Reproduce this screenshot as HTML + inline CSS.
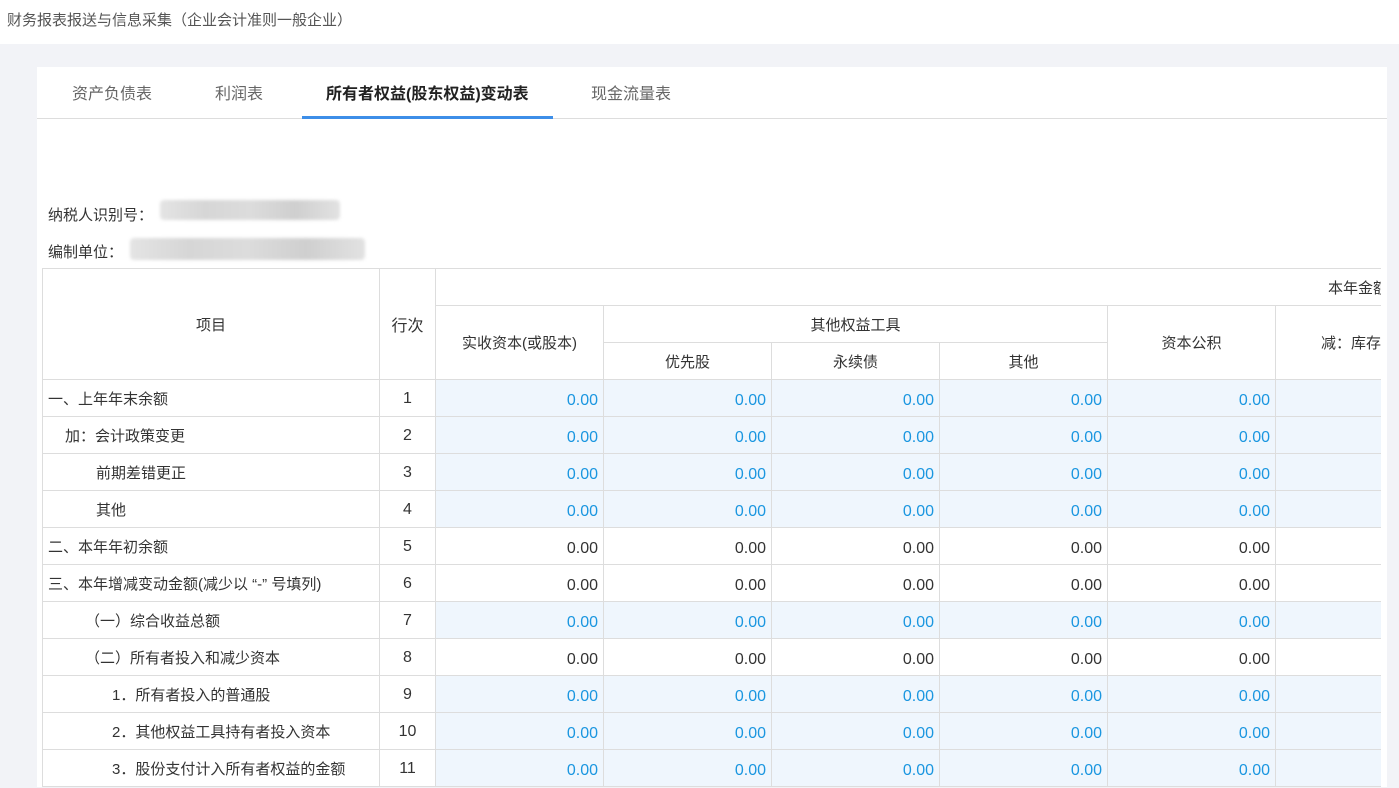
<!DOCTYPE html>
<html><head><meta charset="utf-8"><style>
*{margin:0;padding:0;box-sizing:border-box}
body{width:1399px;height:774px;overflow:hidden;background:#f2f3f7;font-family:"Liberation Sans","Noto Sans CJK SC",sans-serif;color:#333;font-size:15px;position:relative}
.top{position:absolute;left:0;top:0;width:1399px;height:44px;background:#fff;font-size:15px;color:#555;padding:9px 0 0 7px}
.card{position:absolute;left:37px;top:67px;width:1350px;height:720px;background:#fff}
.tabs{position:absolute;left:0;top:0;width:1350px;height:52px;border-bottom:1px solid #ddd}
.tab{position:absolute;top:13px;font-size:16px;color:#666}
.tab.on{color:#222;font-weight:bold}
.ul{position:absolute;left:265px;top:49px;width:251px;height:3px;background:#3d8ee8}
.lbl{position:absolute;left:11px;font-size:15px;color:#333}
.blur{position:absolute;background:linear-gradient(90deg,#e4e4e4,#d6d6d6,#dcdcdc,#cfcfcf,#e2e2e2);border-radius:4px;filter:blur(1.5px)}
.wrap{position:absolute;left:5px;top:201px;width:1339px;height:520px;overflow:hidden}
table{border-collapse:collapse;table-layout:fixed;width:1507px}
td{border:1px solid #ddd;height:37px;padding:0 5px;white-space:nowrap;overflow:hidden}
th{border:1px solid #ddd;font-weight:normal;height:37px;text-align:center}
td.n{text-align:center;font-size:16px;padding-top:2px}
td.v{text-align:right;font-size:16px;color:#1a96e0;background:#eff6fd;padding-top:5px}
td.k{text-align:right;font-size:16px;color:#333;padding-top:5px}
</style></head><body>
<div class="top">财务报表报送与信息采集（企业会计准则一般企业）</div>
<div class="card">
<div class="tabs">
<span class="tab" style="left:35px">资产负债表</span>
<span class="tab" style="left:178px">利润表</span>
<span class="tab on" style="left:289px">所有者权益(股东权益)变动表</span>
<span class="tab" style="left:554px">现金流量表</span>
<div class="ul"></div>
</div>
<div class="lbl" style="top:137px">纳税人识别号：</div>
<div class="blur" style="left:123px;top:133px;width:180px;height:20px"></div>
<div class="lbl" style="top:174px">编制单位：</div>
<div class="blur" style="left:93px;top:171px;width:235px;height:22px"></div>
<div class="wrap"><table>
<colgroup><col style="width:337px"><col style="width:56px"><col style="width:168px"><col style="width:168px"><col style="width:168px"><col style="width:168px"><col style="width:168px"><col style="width:274px"></colgroup>
<tr><th rowspan="3">项目</th><th rowspan="3" style="font-size:16px">行次</th><th colspan="6" style="text-align:left;padding-left:892px">本年金额</th></tr>
<tr><th rowspan="2">实收资本(或股本)</th><th colspan="3">其他权益工具</th><th rowspan="2">资本公积</th><th rowspan="2" style="text-align:left;padding-left:45px">减：库存股</th></tr>
<tr><th>优先股</th><th>永续债</th><th>其他</th></tr>
<tr><td>一、上年年末余额</td><td class="n">1</td><td class="v">0.00</td><td class="v">0.00</td><td class="v">0.00</td><td class="v">0.00</td><td class="v">0.00</td><td class="v"></td></tr>
<tr><td style="padding-left:22px">加：会计政策变更</td><td class="n">2</td><td class="v">0.00</td><td class="v">0.00</td><td class="v">0.00</td><td class="v">0.00</td><td class="v">0.00</td><td class="v"></td></tr>
<tr><td style="padding-left:53px">前期差错更正</td><td class="n">3</td><td class="v">0.00</td><td class="v">0.00</td><td class="v">0.00</td><td class="v">0.00</td><td class="v">0.00</td><td class="v"></td></tr>
<tr><td style="padding-left:53px">其他</td><td class="n">4</td><td class="v">0.00</td><td class="v">0.00</td><td class="v">0.00</td><td class="v">0.00</td><td class="v">0.00</td><td class="v"></td></tr>
<tr><td>二、本年年初余额</td><td class="n">5</td><td class="k">0.00</td><td class="k">0.00</td><td class="k">0.00</td><td class="k">0.00</td><td class="k">0.00</td><td class="k"></td></tr>
<tr><td>三、本年增减变动金额(减少以 “-” 号填列)</td><td class="n">6</td><td class="k">0.00</td><td class="k">0.00</td><td class="k">0.00</td><td class="k">0.00</td><td class="k">0.00</td><td class="k"></td></tr>
<tr><td style="padding-left:42px">（一）综合收益总额</td><td class="n">7</td><td class="v">0.00</td><td class="v">0.00</td><td class="v">0.00</td><td class="v">0.00</td><td class="v">0.00</td><td class="v"></td></tr>
<tr><td style="padding-left:42px">（二）所有者投入和减少资本</td><td class="n">8</td><td class="k">0.00</td><td class="k">0.00</td><td class="k">0.00</td><td class="k">0.00</td><td class="k">0.00</td><td class="k"></td></tr>
<tr><td style="padding-left:69px">1．所有者投入的普通股</td><td class="n">9</td><td class="v">0.00</td><td class="v">0.00</td><td class="v">0.00</td><td class="v">0.00</td><td class="v">0.00</td><td class="v"></td></tr>
<tr><td style="padding-left:69px">2．其他权益工具持有者投入资本</td><td class="n">10</td><td class="v">0.00</td><td class="v">0.00</td><td class="v">0.00</td><td class="v">0.00</td><td class="v">0.00</td><td class="v"></td></tr>
<tr><td style="padding-left:69px">3．股份支付计入所有者权益的金额</td><td class="n">11</td><td class="v">0.00</td><td class="v">0.00</td><td class="v">0.00</td><td class="v">0.00</td><td class="v">0.00</td><td class="v"></td></tr>
</table></div>
</div>
</body></html>
